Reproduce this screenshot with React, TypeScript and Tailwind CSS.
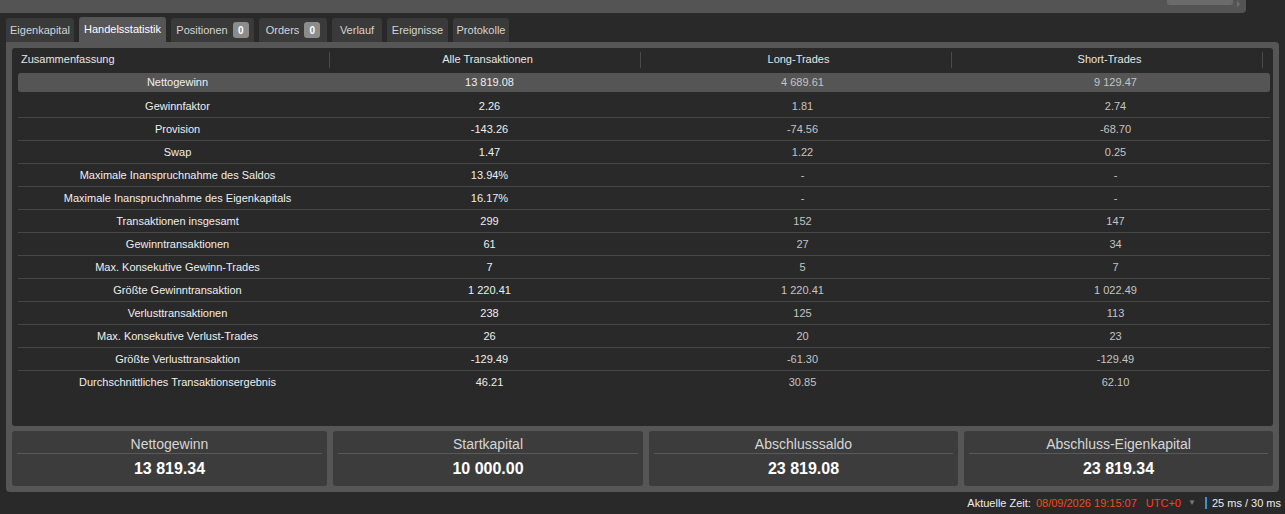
import React from "react";

const rows: [string, string, string, string][] = [
  ["Nettogewinn", "13 819.08", "4 689.61", "9 129.47"],
  ["Gewinnfaktor", "2.26", "1.81", "2.74"],
  ["Provision", "-143.26", "-74.56", "-68.70"],
  ["Swap", "1.47", "1.22", "0.25"],
  ["Maximale Inanspruchnahme des Saldos", "13.94%", "-", "-"],
  ["Maximale Inanspruchnahme des Eigenkapitals", "16.17%", "-", "-"],
  ["Transaktionen insgesamt", "299", "152", "147"],
  ["Gewinntransaktionen", "61", "27", "34"],
  ["Max. Konsekutive Gewinn-Trades", "7", "5", "7"],
  ["Größte Gewinntransaktion", "1 220.41", "1 220.41", "1 022.49"],
  ["Verlusttransaktionen", "238", "125", "113"],
  ["Max. Konsekutive Verlust-Trades", "26", "20", "23"],
  ["Größte Verlusttransaktion", "-129.49", "-61.30", "-129.49"],
  ["Durchschnittliches Transaktionsergebnis", "46.21", "30.85", "62.10"],
];

const tabs: { label: string; w: string; badge?: boolean; active?: boolean }[] = [
  { label: "Eigenkapital", w: "w-[68px]" },
  { label: "Handelsstatistik", w: "w-[87px]", active: true },
  { label: "Positionen", w: "w-[83px]", badge: true },
  { label: "Orders", w: "w-[68px]", badge: true },
  { label: "Verlauf", w: "w-[50px]" },
  { label: "Ereignisse", w: "w-[61px]" },
  { label: "Protokolle", w: "w-[56px]" },
];

const cards: [string, string][] = [
  ["Nettogewinn", "13 819.34"],
  ["Startkapital", "10 000.00"],
  ["Abschlusssaldo", "23 819.08"],
  ["Abschluss-Eigenkapital", "23 819.34"],
];

export default function App() {
  return (
    <div className="w-[1285px] h-[514px] bg-[#292929] flex flex-col font-['Liberation_Sans',Arial,sans-serif] overflow-hidden">
      {/* top scroll bar */}
      <div className="relative h-[13px] w-[1246px] bg-[#545454] rounded-br-[4px] shrink-0">
        <div className="absolute left-[1167px] top-0 w-[66px] h-[5px] bg-[#6b6b6b] rounded-b-[3px]" />
        <div className="absolute left-[1237px] top-[1px] w-0 h-0 border-y-[3px] border-y-transparent border-l-[3px] border-l-[#6e6e6e]" />
      </div>

      {/* tabs */}
      <div className="flex items-end gap-[5px] pl-[6px] h-[29px] shrink-0">
        {tabs.map((t) => (
          <div
            key={t.label}
            className={
              t.active
                ? `${t.w} h-[25px] bg-[#565656] rounded-t-[3px] flex items-center justify-center text-[11px] text-white`
                : `${t.w} h-[24px] bg-[#3a3a3a] rounded-t-[3px] flex items-center justify-center gap-[5px] text-[11px] text-[#d4d4d4]`
            }
          >
            <span>{t.label}</span>
            {t.badge && (
              <span className="w-[16px] h-[16px] rounded-[3px] bg-[#8c8c8c] text-white text-[10px] font-bold flex items-center justify-center">
                0
              </span>
            )}
          </div>
        ))}
      </div>

      {/* panel */}
      <div className="ml-[6px] w-[1273px] h-[450px] bg-[#565656] rounded-[4px] rounded-tl-none p-[6px] flex flex-col gap-[5px] shrink-0">
        <div className="h-[378px] bg-[#292929] rounded-[3px] pl-[6px] pr-[3px] flex flex-col">
          {/* header */}
          <div className="h-[23px] flex items-center text-[11px] text-[#e6e6e6] shrink-0">
            <div className="w-[312px] h-[16px] flex items-center border-r border-[#4a4a4a] pl-[3px]">
              Zusammenfassung
            </div>
            <div className="w-[311px] h-[16px] flex items-center justify-center border-r border-[#4a4a4a] pl-[5px]">
              Alle Transaktionen
            </div>
            <div className="w-[311px] h-[16px] flex items-center justify-center border-r border-[#4a4a4a] pl-[5px]">
              Long-Trades
            </div>
            <div className="w-[311px] h-[16px] flex items-center justify-center border-r border-[#4a4a4a] pl-[5px]">
              Short-Trades
            </div>
          </div>
          {/* rows */}
          {rows.map((r, i) =>
            i === 0 ? (
              <div key={i} className="h-[24px] pt-[2px] pb-[3px] shrink-0">
                <div className="h-[19px] bg-[#555555] rounded-[3px] grid grid-cols-4 items-center text-[11px]">
                  <div className="text-center text-[#f0f0f0] pl-[6px]">{r[0]}</div>
                  <div className="text-center text-[#f0f0f0] pl-[4px]">{r[1]}</div>
                  <div className="text-center text-[#c4c4c4] pl-[4px]">{r[2]}</div>
                  <div className="text-center text-[#c4c4c4] pl-[4px]">{r[3]}</div>
                </div>
              </div>
            ) : (
              <div
                key={i}
                className={`h-[23px] grid grid-cols-4 items-center text-[11px] shrink-0 ${
                  i < rows.length - 1 ? "border-b border-[#464646]" : ""
                }`}
              >
                <div className="text-center text-[#eeeeee] pl-[6px]">{r[0]}</div>
                <div className="text-center text-[#eeeeee] pl-[4px]">{r[1]}</div>
                <div className="text-center text-[#c4c4c4] pl-[4px]">{r[2]}</div>
                <div className="text-center text-[#c4c4c4] pl-[4px]">{r[3]}</div>
              </div>
            )
          )}
        </div>

        {/* summary cards */}
        <div className="h-[55px] grid grid-cols-[315px_310px_309px_309px] gap-[6px] shrink-0">
          {cards.map(([title, value]) => (
            <div key={title} className="bg-[#3c3c3c] rounded-[3px] px-[5px] flex flex-col">
              <div className="h-[23px] flex items-end justify-center pb-[2px] text-[14px] leading-none text-[#d6d6d6] border-b border-[#5a5a5a]">
                {title}
              </div>
              <div className="flex-1 flex items-center justify-center text-[16px] font-bold text-white pb-[3px]">
                {value}
              </div>
            </div>
          ))}
        </div>
      </div>

      {/* status bar */}
      <div className="flex-1 flex items-center justify-end pr-[4px] text-[11px] whitespace-nowrap">
        <span className="text-[#ececec]">Aktuelle Zeit:</span>
        <span className="text-[#f04a1e] ml-[5px]">08/09/2026 19:15:07</span>
        <span className="text-[#ff3c1c] ml-[9px]">UTC+0</span>
        <span className="text-[#7a7a7a] text-[8px] ml-[7px]">▼</span>
        <span className="ml-[9px] w-[2px] h-[12px] bg-[#3b8fd6]" />
        <span className="text-[#ececec] ml-[5px]">25 ms / 30 ms</span>
      </div>
    </div>
  );
}
